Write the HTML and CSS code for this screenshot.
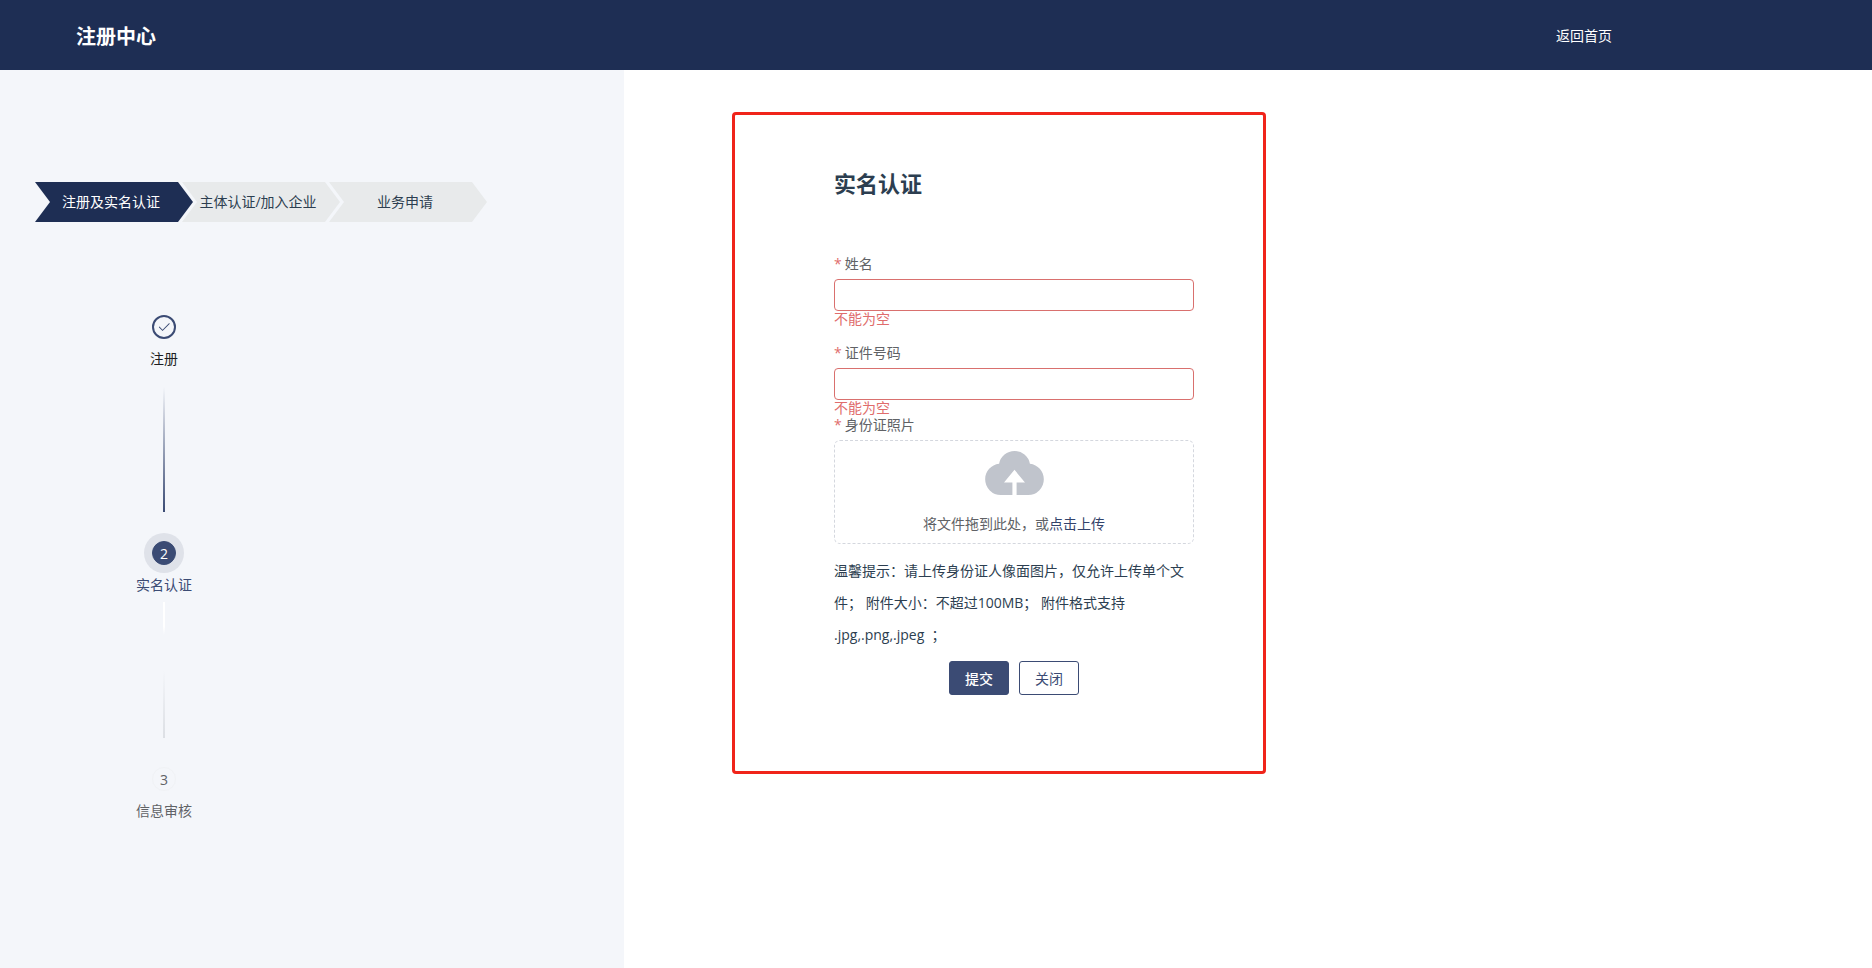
FILE: index.html
```
<!DOCTYPE html>
<html lang="zh-CN">
  <head>
    <meta charset="UTF-8">
    <title>注册中心</title>
    <link rel="stylesheet" href="styles.css">
  </head>
  <body>
    <header class="header">
      <h1 class="header-title">注册中心</h1>
      <a class="header-link" href="#">返回首页</a>
    </header>

    <main class="main">
      <aside class="sidebar">
        <ol class="stages">
          <li class="stage active">注册及实名认证</li>
          <li class="stage">主体认证/加入企业</li>
          <li class="stage">业务申请</li>
        </ol>

        <ol class="steps">
          <li class="step done">
            <div class="step-icon">
              <span class="step-circle">
                <svg width="14" height="14" viewBox="0 0 1024 1024">
                  <path fill="currentColor" d="M406.656 706.944 195.84 496.256a32 32 0 1 0-45.248 45.248l256 256 512-512a32 32 0 0 0-45.248-45.248L406.592 706.944z"/>
                </svg>
              </span>
            </div>
            <span class="step-label">注册</span>
            <div class="step-line"></div>
          </li>
          <li class="step current">
            <div class="step-icon"><span class="step-circle">2</span></div>
            <span class="step-label">实名认证</span>
            <div class="step-line"></div>
          </li>
          <li class="step">
            <div class="step-icon"><span class="step-circle">3</span></div>
            <span class="step-label">信息审核</span>
          </li>
        </ol>
      </aside>

      <section class="content">
        <form class="panel">
          <h2 class="panel-title">实名认证</h2>

          <div class="form-item">
            <label class="form-label" for="name">姓名</label>
            <input class="form-input" id="name" type="text">
            <p class="form-error">不能为空</p>
          </div>

          <div class="form-item">
            <label class="form-label" for="idNumber">证件号码</label>
            <input class="form-input" id="idNumber" type="text">
            <p class="form-error">不能为空</p>
          </div>

          <div class="form-item">
            <label class="form-label" for="photo">身份证照片</label>
            <label class="upload" for="photo">
              <svg width="59" height="44" viewBox="64 192 896 672">
                <path fill="currentColor" d="M544 864V672h128L512 480 352 672h128v192H320v-1.6c-5.376.32-10.496 1.6-16 1.6A240 240 0 0 1 64 624c0-123.136 93.12-223.488 212.608-237.248A239.808 239.808 0 0 1 512 192a239.872 239.872 0 0 1 235.456 194.752c119.488 13.76 212.48 114.112 212.48 237.248a240 240 0 0 1-240 240c-5.376 0-10.56-1.28-16-1.6v1.6H544z"/>
              </svg>
              <span class="upload-text">将文件拖到此处，或<em>点击上传</em></span>
            </label>
            <input class="upload-input" id="photo" type="file" accept=".jpg,.png,.jpeg">
          </div>

          <p class="hint">温馨提示：请上传身份证人像面图片，仅允许上传单个文件； 附件大小：不超过100MB； 附件格式支持 .jpg,.png,.jpeg&nbsp; ；</p>

          <div class="actions">
            <button class="btn btn-primary" type="submit">提交</button>
            <button class="btn" type="button">关闭</button>
          </div>
        </form>
      </section>
    </main>
  </body>
</html>
```
FILE: styles.css
```
* {
  box-sizing: border-box;
}

body {
  display: flex;
  flex-direction: column;
  min-height: 100vh;
  margin: 0;
  font-family: "Open Sans", "Noto Sans CJK SC", sans-serif;
  font-size: 14px;
  color: #2c3e50;
  background: #fff;
}

h1,
h2,
p,
ol {
  margin: 0;
  padding: 0;
}

ol {
  list-style: none;
}

.header {
  display: flex;
  align-items: center;
  justify-content: space-between;
  height: 70px;
  padding: 0 260px 0 76px;
  background: #1e2e54;
  color: #fff;
}

.header-title {
  font-size: 20px;
  font-weight: 700;
}

.header-link {
  color: #fff;
  text-decoration: none;
}

.main {
  display: grid;
  grid-template-columns: 1fr 2fr;
  flex: 1;
}

/* sidebar */
.sidebar {
  padding: 112px 35px 0;
  background: #f4f6fa;
}

.stages {
  display: flex;
}

.stage {
  width: 158px;
  padding-right: 6px;
  line-height: 40px;
  text-align: center;
  white-space: nowrap;
  background: #e8eaeb;
  clip-path: polygon(0 0, 143px 0, 100% 50%, 143px 100%, 0 100%, 15px 50%);
}

.stage + .stage {
  margin-left: -11px;
}

.stage.active {
  background: #1e2e54;
  color: #fff;
}

.steps {
  width: 56px;
  margin: 85px 0 0 101px;
}

.step {
  display: flex;
  flex-direction: column;
  align-items: center;
  color: #606266;
}

.step-icon {
  display: flex;
  align-items: center;
  justify-content: center;
  width: 40px;
  height: 40px;
  border-radius: 50%;
}

.step-circle {
  display: flex;
  align-items: center;
  justify-content: center;
  width: 24px;
  height: 24px;
  border: 1px solid #f0f2f5;
  border-radius: 50%;
}

.step-label {
  line-height: 24px;
  white-space: nowrap;
}

.step-line {
  width: 2px;
  height: 136px;
  margin: 5px 0 21px;
  background: linear-gradient(#f4f6fa 8%, #3b4b74);
}

.step.done {
  color: #1d1e22;
}

.step.done .step-circle {
  border: 2px solid #3b4b74;
  color: #3b4b74;
}

.step.current {
  color: #3b4b74;
}

.step.current .step-icon {
  background: #dfe2e9;
}

.step.current .step-circle {
  border-color: #3b4b74;
  background: #3b4b74;
  color: #fff;
}

.step.current .step-line {
  background: linear-gradient(#fff 18%, #f4f6fa 24%, #f4f6fa 50%, #dcdfe4);
}

/* form */
.content {
  padding: 42px 108px 0;
}

.panel {
  width: 534px;
  padding: 52px 69px 76px 99px;
  border: 3px solid #f0241a;
  border-radius: 4px;
}

.panel-title {
  margin-bottom: 56px;
  font-size: 22px;
  line-height: 32px;
}

.form-item {
  margin-bottom: 17px;
}

.form-item:nth-of-type(2) {
  margin-bottom: 0;
}

.form-label {
  display: block;
  padding-bottom: 6px;
  line-height: 18px;
  color: #606266;
}

.form-label::before {
  content: "*";
  margin-right: 3px;
  color: #e06c6c;
}

.form-input {
  display: block;
  width: 100%;
  height: 32px;
  padding: 0 11px;
  border: 1px solid #d9706e;
  border-radius: 4px;
  background: #fff;
  font: inherit;
  color: #606266;
}

.form-error {
  line-height: 16px;
  color: #e06c6c;
}

.upload {
  display: flex;
  flex-direction: column;
  align-items: center;
  height: 104px;
  padding-top: 10px;
  border: 1px dashed #d4d7de;
  border-radius: 6px;
  color: #c0c4cc;
  cursor: pointer;
}

.upload-text {
  margin-top: 18px;
  line-height: 22px;
  color: #606266;
}

.upload-text em {
  font-style: normal;
  color: #33436b;
}

.upload-input {
  position: absolute;
  width: 1px;
  height: 1px;
  opacity: 0;
}

.hint {
  margin-top: -6px;
  line-height: 32px;
}

.actions {
  display: flex;
  justify-content: center;
  gap: 10px;
  margin-top: 10px;
}

.btn {
  width: 60px;
  height: 34px;
  padding: 0;
  border: 1px solid #3b4b74;
  border-radius: 3px;
  background: #fff;
  color: #3b4b74;
  font: inherit;
  cursor: pointer;
}

.btn-primary {
  background: #3b4b74;
  color: #fff;
  font-weight: 500;
}
```
